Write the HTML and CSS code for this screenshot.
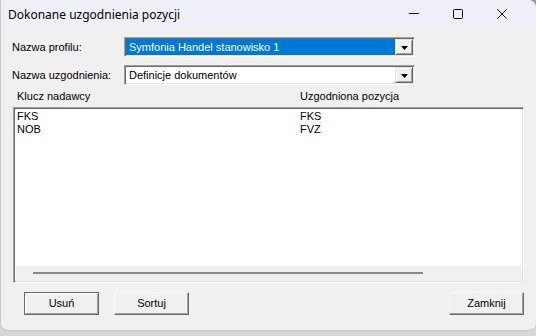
FILE: index.html
```html
<!DOCTYPE html>
<html>

<head>
  <meta charset="UTF-8">
  <link rel="stylesheet" href="styles.css">
</head>

<body>
  <div class="window">
    <div class="titlebar">
      <span class="title">Dokonane uzgodnienia pozycji</span>
      <div class="caption">
        <span class="cap-btn">
          <svg width="10" height="10" viewBox="0 0 10 10"><path d="M0 4.5h10" stroke="#000" stroke-width="1"/></svg>
        </span>
        <span class="cap-btn">
          <svg width="10" height="10" viewBox="0 0 10 10"><rect x="0.5" y="0.5" width="9" height="9" rx="1" fill="none" stroke="#000" stroke-width="1"/></svg>
        </span>
        <span class="cap-btn">
          <svg width="10" height="10" viewBox="0 0 10 10"><path d="M0.3 0.3 9.7 9.7M9.7 0.3 0.3 9.7" stroke="#000" stroke-width="1"/></svg>
        </span>
      </div>
    </div>

    <div class="client">
      <div class="form-grid">
        <label class="field-label">Nazwa profilu:</label>
        <div class="combo">
          <span class="combo-value selected">Symfonia Handel stanowisko 1</span>
          <span class="drop-btn"><svg width="7" height="4" viewBox="0 0 7 4"><path d="M0 0h7l-3.5 4z" fill="#000"/></svg></span>
        </div>
        <label class="field-label">Nazwa uzgodnienia:</label>
        <div class="combo">
          <span class="combo-value">Definicje dokumentów</span>
          <span class="drop-btn"><svg width="7" height="4" viewBox="0 0 7 4"><path d="M0 0h7l-3.5 4z" fill="#000"/></svg></span>
        </div>
      </div>

      <div class="list-head">
        <span class="col-1">Klucz nadawcy</span>
        <span class="col-2">Uzgodniona pozycja</span>
      </div>
      <div class="list">
        <div class="rows">
          <div class="row"><span class="col-1">FKS</span><span class="col-2">FKS</span></div>
          <div class="row"><span class="col-1">NOB</span><span class="col-2">FVZ</span></div>
        </div>
        <div class="hscroll"><div class="thumb"></div></div>
      </div>

      <div class="button-row">
        <button type="button" class="btn default">Usuń</button>
        <button type="button" class="btn">Sortuj</button>
        <button type="button" class="btn push-right">Zamknij</button>
      </div>
    </div>
  </div>
</body>

</html>
```

FILE: styles.css
```css
html {
    box-sizing: border-box;
}

*, ::before, ::after {
    box-sizing: inherit;
}

body {
    margin: 0;
    width: 536px;
    height: 336px;
    overflow: hidden;
    background: linear-gradient(#9a9a9a, #d8d8d8);
    font-family: 'Liberation Sans', Arial, sans-serif;
    font-size: 11px;
    color: #000;
}

/* WINDOW FRAME */

.window {
    width: 536px;
    height: 331px;
    display: flex;
    flex-direction: column;
    background-color: #f0f0f0;
    border: 1px solid #c9c9c9;
    border-top: none;
    border-right: none;
    border-radius: 0 8px 8px 8px;
    overflow: hidden;
}

.titlebar {
    height: 29px;
    flex: none;
    display: flex;
    align-items: center;
    background-color: #eff0f7;
    padding-left: 7px;
}

.title {
    font-family: 'Noto Sans', sans-serif;
    font-size: 12px;
    flex: 1;
    padding-bottom: 1px;
}

.caption {
    display: flex;
    align-items: center;
    padding-right: 12px;
    padding-bottom: 1px;
}

.cap-btn {
    width: 44px;
    display: flex;
    justify-content: center;
}

.cap-btn svg {
    display: block;
}

/* CLIENT AREA */

.client {
    flex: 1;
    display: flex;
    flex-direction: column;
    padding: 8px 12px 0 11px;
}

.form-grid {
    display: grid;
    grid-template-columns: 112px 291px;
    row-gap: 8px;
    align-items: center;
}

.field-label {
    padding-bottom: 1px;
}

.combo {
    height: 20px;
    display: flex;
    border: 1px solid;
    border-color: #a0a0a0 #fff #fff #a0a0a0;
    box-shadow: inset 1px 1px 0 #696969, inset -1px -1px 0 #e3e3e3;
    padding: 2px;
    background-color: #fff;
}

.combo-value {
    flex: 1;
    line-height: 14px;
    padding-left: 3px;
    margin: 0 1px 0 -1px;
    white-space: nowrap;
    overflow: hidden;
}

.combo-value.selected {
    background-color: #0078d7;
    color: #fff;
    margin: -1px 0 -1px -1px;
    line-height: 16px;
}

.drop-btn {
    width: 18px;
    margin: -1px -1px -1px 0;
    display: flex;
    align-items: center;
    justify-content: center;
    background-color: #f0f0f0;
    border: 1px solid;
    border-color: #e3e3e3 #696969 #696969 #e3e3e3;
    box-shadow: inset 1px 1px 0 #fff, inset -1px -1px 0 #a0a0a0;
    padding-top: 1px;
}

.drop-btn svg {
    display: block;
}

/* LIST */

.list-head {
    display: flex;
    height: 22px;
    padding-top: 5px;
    line-height: 13px;
    margin-left: 1px;
}

.list-head .col-1 {
    width: 287px;
    padding-left: 4px;
}

.list {
    height: 176px;
    display: flex;
    flex-direction: column;
    margin-left: 1px;
    border: 1px solid;
    border-color: #a0a0a0 #fff #fff #a0a0a0;
    box-shadow: inset 1px 1px 0 #696969, inset -1px -1px 0 #e3e3e3;
    padding: 2px 1px 1px 2px;
    background-color: #fff;
}

.rows {
    flex: 1;
}

.row {
    display: flex;
    line-height: 13px;
    padding-left: 1px;
}

.row .col-1 {
    width: 283px;
}

.hscroll {
    height: 15px;
    background-color: #f0f0f0;
    padding: 6px 0 0 17px;
}

.thumb {
    width: 390px;
    height: 2px;
    background-color: #8a8a8a;
}

/* BUTTONS */

.button-row {
    display: flex;
    gap: 15px;
    margin-top: 9px;
    padding-left: 12px;
}

.btn {
    width: 75px;
    height: 23px;
    padding: 0 0 1px;
    font-family: inherit;
    font-size: 11px;
    color: #000;
    background-color: #f0f0f0;
    border: 1px solid;
    border-color: #fff #696969 #696969 #fff;
    box-shadow: inset -1px -1px 0 #a0a0a0;
}

.btn.default {
    border-color: #696969;
    box-shadow: inset 1px 1px 0 #fff, inset -1px -1px 0 #a0a0a0;
}

.push-right {
    margin-left: auto;
}
```
